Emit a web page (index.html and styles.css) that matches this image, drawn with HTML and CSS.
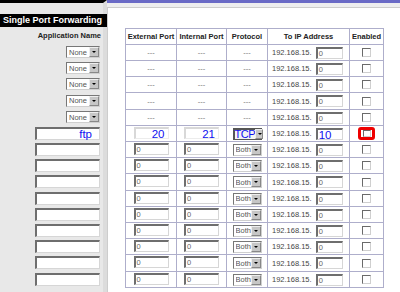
FILE: index.html
```html
<!DOCTYPE html>
<html lang="en">
<head>
	<meta charset="UTF-8">
	<link rel="stylesheet" href="styles.css">
	<title>Single Port Forwarding</title>
</head>
<body>
	<div class="page">
		<div class="side">
			<div class="side-title">Single Port Forwarding</div>
			<div class="side-head">Application Name</div>
			<div class="side-row"><span class="sel"><span>None</span><i></i></span></div>
			<div class="side-row"><span class="sel"><span>None</span><i></i></span></div>
			<div class="side-row"><span class="sel"><span>None</span><i></i></span></div>
			<div class="side-row"><span class="sel"><span>None</span><i></i></span></div>
			<div class="side-row"><span class="sel"><span>None</span><i></i></span></div>
			<div class="side-row"><span class="box app big">ftp</span></div>
			<div class="side-row"><span class="box app"></span></div>
			<div class="side-row"><span class="box app"></span></div>
			<div class="side-row"><span class="box app"></span></div>
			<div class="side-row"><span class="box app"></span></div>
			<div class="side-row"><span class="box app"></span></div>
			<div class="side-row"><span class="box app"></span></div>
			<div class="side-row"><span class="box app"></span></div>
			<div class="side-row"><span class="box app"></span></div>
			<div class="side-row"><span class="box app"></span></div>
		</div>
		<div class="main">
			<div class="panel">
				<table class="fwd">
					<colgroup>
						<col class="c-ext"><col class="c-int"><col class="c-proto"><col class="c-ip"><col class="c-en">
					</colgroup>
					<tr class="head">
						<th>External Port</th><th>Internal Port</th><th>Protocol</th><th>To IP Address</th><th>Enabled</th>
					</tr>
					<tr><td class="dash">---</td><td class="dash">---</td><td class="dash">---</td><td><div class="ip">192.168.15. <span class="box ipb">0</span></div></td><td><span class="chk"></span></td></tr>
					<tr><td class="dash">---</td><td class="dash">---</td><td class="dash">---</td><td><div class="ip">192.168.15. <span class="box ipb">0</span></div></td><td><span class="chk"></span></td></tr>
					<tr><td class="dash">---</td><td class="dash">---</td><td class="dash">---</td><td><div class="ip">192.168.15. <span class="box ipb">0</span></div></td><td><span class="chk"></span></td></tr>
					<tr><td class="dash">---</td><td class="dash">---</td><td class="dash">---</td><td><div class="ip">192.168.15. <span class="box ipb">0</span></div></td><td><span class="chk"></span></td></tr>
					<tr><td class="dash">---</td><td class="dash">---</td><td class="dash">---</td><td><div class="ip">192.168.15. <span class="box ipb">0</span></div></td><td><span class="chk"></span></td></tr>
					<tr class="edit">
						<td><span class="box port big faint">20</span></td>
						<td><span class="box port big faint">21</span></td>
						<td><span class="sel proto dark"><span class="big">TCP</span><i></i></span></td>
						<td><div class="ip">192.168.15. <span class="box ipb big">10</span></div></td>
						<td><span class="mark"><span class="chk"></span></span></td>
					</tr>
					<tr><td><span class="box port">0</span></td><td><span class="box port">0</span></td><td><span class="sel proto"><span>Both</span><i></i></span></td><td><div class="ip">192.168.15. <span class="box ipb">0</span></div></td><td><span class="chk"></span></td></tr>
					<tr><td><span class="box port">0</span></td><td><span class="box port">0</span></td><td><span class="sel proto"><span>Both</span><i></i></span></td><td><div class="ip">192.168.15. <span class="box ipb">0</span></div></td><td><span class="chk"></span></td></tr>
					<tr><td><span class="box port">0</span></td><td><span class="box port">0</span></td><td><span class="sel proto"><span>Both</span><i></i></span></td><td><div class="ip">192.168.15. <span class="box ipb">0</span></div></td><td><span class="chk"></span></td></tr>
					<tr><td><span class="box port">0</span></td><td><span class="box port">0</span></td><td><span class="sel proto"><span>Both</span><i></i></span></td><td><div class="ip">192.168.15. <span class="box ipb">0</span></div></td><td><span class="chk"></span></td></tr>
					<tr><td><span class="box port">0</span></td><td><span class="box port">0</span></td><td><span class="sel proto"><span>Both</span><i></i></span></td><td><div class="ip">192.168.15. <span class="box ipb">0</span></div></td><td><span class="chk"></span></td></tr>
					<tr><td><span class="box port">0</span></td><td><span class="box port">0</span></td><td><span class="sel proto"><span>Both</span><i></i></span></td><td><div class="ip">192.168.15. <span class="box ipb">0</span></div></td><td><span class="chk"></span></td></tr>
					<tr><td><span class="box port">0</span></td><td><span class="box port">0</span></td><td><span class="sel proto"><span>Both</span><i></i></span></td><td><div class="ip">192.168.15. <span class="box ipb">0</span></div></td><td><span class="chk"></span></td></tr>
					<tr><td><span class="box port">0</span></td><td><span class="box port">0</span></td><td><span class="sel proto"><span>Both</span><i></i></span></td><td><div class="ip">192.168.15. <span class="box ipb">0</span></div></td><td><span class="chk"></span></td></tr>
					<tr><td><span class="box port">0</span></td><td><span class="box port">0</span></td><td><span class="sel proto"><span>Both</span><i></i></span></td><td><div class="ip">192.168.15. <span class="box ipb">0</span></div></td><td><span class="chk"></span></td></tr>
				</table>
			</div>
		</div>
	</div>
</body>
</html>
```

FILE: styles.css
```css
* {
	box-sizing: border-box;
}

:root {
	--purple: #6a6ac6;
	--grid: #aeaecb;
	--side: #e8e8e8;
	--ink: #3a3a3a;
	--blue: #1010f0;
}

body {
	margin: 0;
	width: 400px;
	height: 292px;
	overflow: hidden;
	background: #fff;
	color: var(--ink);
	font-family: "Liberation Sans", Arial, sans-serif;
	font-size: 7.5px;
}

.page {
	display: flex;
	height: 292px;
}

/* left column */
.side {
	width: 107px;
	flex-shrink: 0;
	background: var(--side);
	border-top: 3px solid #000;
	border-right: 4px solid #dcdcdc;
}
.side-title {
	margin: 11px -4px 0 0;
	height: 13px;
	line-height: 13px;
	padding-left: 3px;
	background: #000;
	color: #fff;
	font-size: 9px;
	font-weight: bold;
	white-space: nowrap;
}
.side-head {
	margin-top: 1px;
	height: 16px;
	line-height: 16px;
	text-align: right;
	padding-right: 2px;
	font-weight: bold;
	color: #222;
}
.side-row {
	height: 16px;
	display: flex;
	align-items: center;
	justify-content: flex-end;
	padding-right: 3px;
}
/* every fifth row is a pixel taller, same as the table */
.side-row:nth-child(5n+1) {
	height: 17px;
}

/* fake form controls */
.box {
	display: inline-block;
	height: 12px;
	line-height: 9px;
	padding-left: 1px;
	text-align: left;
	background: #fff;
	border-style: solid;
	border-width: 2px 1px 1px 2px;
	border-color: #6e6e6e #d6d6d6 #d6d6d6 #6e6e6e;
	color: #666;
	overflow: hidden;
	white-space: nowrap;
}
.box.app {
	width: 65px;
	height: 13px;
}
.box.port {
	width: 35px;
}
.box.ipb {
	width: 27px;
	margin-left: 4px;
}
.box.faint {
	border-color: #d8d8d8 #ececec #ececec #d8d8d8;
	text-align: right;
	padding-right: 3px;
}
.box.app.big {
	text-align: right;
	padding-right: 7px;
}
.big {
	color: var(--blue);
	font-size: 11.5px;
}
.box.big {
	line-height: 10px;
	overflow: visible;
}

.sel {
	display: inline-flex;
	align-items: center;
	justify-content: space-between;
	width: 34px;
	height: 12px;
	background: #fff;
	border-style: solid;
	border-width: 1px;
	border-color: #777 #cfcfcf #cfcfcf #777;
	padding: 0 0 0 2px;
	color: #555;
}
.sel > span {
	overflow: hidden;
	white-space: nowrap;
}
.sel i {
	position: relative;
	flex-shrink: 0;
	width: 10px;
	height: 10px;
	background: #c6c6c6;
	border: 1px solid;
	border-color: #eee #888 #888 #eee;
}
.sel i::after {
	content: '';
	position: absolute;
	left: 2px;
	top: 3px;
	border-left: 2px solid transparent;
	border-right: 2px solid transparent;
	border-top: 2px solid #000;
}
.sel.proto {
	width: 29px;
}
.sel.dark {
	border: 1px solid #555;
	border-width: 2px 1px 1px 2px;
	background: #f4f4f4;
	padding-left: 0;
}
.sel.dark > span {
	overflow: visible;
}
.sel.dark .big {
	font-size: 11px;
	letter-spacing: -0.5px;
	line-height: 9px;
}
.sel.dark i {
	width: 8px;
}

/* table */
.main {
	flex: 1;
	border-top: 3px solid var(--purple);
	background: #eeeeef;
}
.panel {
	margin-top: 4px;
	height: 100%;
	background: #fff;
	border-top: 1px solid #cdcdcd;
	border-left: 1px solid #cdcdcd;
	padding: 20px 0 0 17px;
}
.fwd {
	border-collapse: collapse;
	table-layout: fixed;
	width: 258px;
}
.c-ext { width: 51px; }
.c-int { width: 50px; }
.c-proto { width: 41px; }
.c-ip { width: 82px; }
.c-en { width: 34px; }

.fwd th, .fwd td {
	border: 1px solid var(--grid);
	padding: 0;
	text-align: center;
	vertical-align: middle;
}
.fwd th {
	height: 16px;
	font-weight: bold;
	color: #222;
	white-space: nowrap;
}
.fwd td {
	height: 16px;
}
.fwd tr:nth-child(5n) td {
	height: 17px;
}
.dash {
	color: #777;
}
.ip {
	display: flex;
	align-items: center;
	padding-left: 4px;
	color: #444;
}

.chk {
	display: inline-block;
	vertical-align: middle;
	width: 9px;
	height: 9px;
	background: #fff;
	border: 1px solid;
	border-color: #6a6a6a #cfcfcf #cfcfcf #6a6a6a;
}
.mark {
	display: inline-flex;
	align-items: center;
	justify-content: center;
	width: 17px;
	height: 13px;
	border: 3px solid #ee0000;
	border-radius: 3px;
}
.mark .chk {
	width: 8px;
	height: 7px;
}
```
